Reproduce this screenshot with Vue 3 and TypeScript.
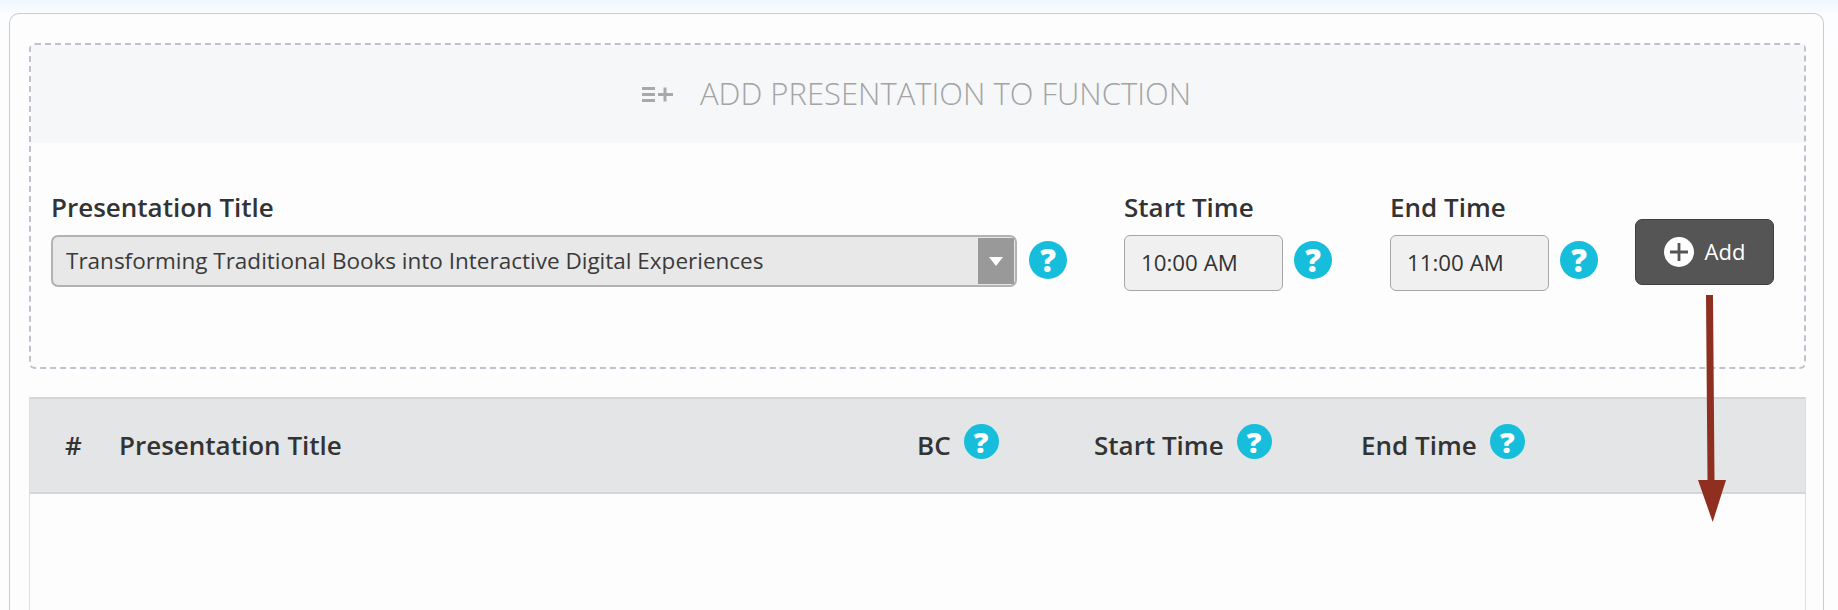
<template>
  <div class="page">
    <div class="card">
      <section class="add-box">
        <header class="add-head">
          <svg class="list-plus" width="31" height="18" viewBox="0 0 31 18" aria-hidden="true">
            <path d="M0 2h13v3H0zM0 8h13v3H0zM0 14h13v3H0zM16 8h5.500V2.500h3V8H31v3h-6.500v5.500h-3V11H16z" />
          </svg>
          <h2>ADD PRESENTATION TO FUNCTION</h2>
        </header>
        <div class="add-form">
          <div class="field">
            <label>Presentation Title</label>
            <div class="control">
              <div class="select">
                <span class="select-text">{{ selected }}</span>
                <span class="select-arrow"><i></i></span>
              </div>
              <span class="help">?</span>
            </div>
          </div>
          <div v-for="t in times" :key="t.label" class="field">
            <label>{{ t.label }}</label>
            <div class="control">
              <div class="time">{{ t.value }}</div>
              <span class="help">?</span>
            </div>
          </div>
          <button class="add-btn" type="button">
            <svg width="30" height="30" viewBox="0 0 30 30" aria-hidden="true">
              <circle cx="15" cy="15" r="15" fill="#fff" />
              <path d="M6 13.600h7.600V6h2.800v7.600H24v2.800h-7.600V24h-2.800v-7.600H6z" fill="#555" />
            </svg>
            <span class="add-label">Add</span>
          </button>
        </div>
      </section>

      <div class="table">
        <div class="thead">
          <div v-for="c in columns" :key="c.label" class="th">
            {{ c.label }}
            <span v-if="c.help" class="help small">?</span>
          </div>
        </div>
        <div class="tbody"></div>
      </div>
    </div>

    <!-- annotation drawn over the screenshot -->
    <svg class="annotation" width="60" height="240" viewBox="0 0 60 240" aria-hidden="true">
      <path d="M26 0h7l1.500 185H46L32.700 227 18 185h9.500z" fill="#8f2f1f" />
    </svg>
  </div>
</template>

<script setup lang="ts">
const selected = 'Transforming Traditional Books into Interactive Digital Experiences'

const times = [
  { label: 'Start Time', value: '10:00 AM' },
  { label: 'End Time', value: '11:00 AM' },
]

const columns = [
  { label: '#', help: false },
  { label: 'Presentation Title', help: false },
  { label: 'BC', help: true },
  { label: 'Start Time', help: true },
  { label: 'End Time', help: true },
]
</script>

<style scoped>
.page {
  position: relative;
  height: 610px;
  box-sizing: border-box;
  overflow: hidden;
  padding: 13px 14px 0 9px;
  background: linear-gradient(180deg, #eff6fe 0, #fbfdff 13px, #fdfdfe 40px);
  font-family: 'Open Sans', 'Noto Sans', sans-serif;
  color: #333;
}

.card {
  height: 597px;
  box-sizing: border-box;
  border: 1px solid #c9ccd2;
  border-bottom: 0;
  border-radius: 10px 10px 0 0;
  background: #fdfdfe;
  padding: 29px 17px 0 19px;
}

.add-box {
  height: 326px;
  box-sizing: border-box;
  border: 2px dashed #bfc2cd;
  border-radius: 6px;
}

.add-head {
  height: 98px;
  box-sizing: border-box;
  background: #f6f7f8;
  display: flex;
  align-items: center;
  justify-content: center;
  gap: 27px;
  padding: 0 2px 2px 0;
}

.list-plus {
  fill: #a9a9a9;
  flex: none;
  margin-top: 2px;
}

.add-head h2 {
  margin: 0;
  font-size: 31px;
  font-weight: 300;
  color: #a4a4a4;
}

.add-form {
  display: flex;
  align-items: flex-start;
  padding: 47px 0 0 20px;
}

.field label {
  display: block;
  height: 45px;
  line-height: 35px;
  font-size: 26px;
  font-weight: 600;
  color: #333;
}

.field + .field {
  margin-left: 57px;
}

.field:nth-child(3) {
  margin-left: 58px;
}

.control {
  display: flex;
  align-items: flex-start;
  gap: 11px;
}

.select {
  width: 966px;
  height: 52px;
  box-sizing: border-box;
  display: flex;
  justify-content: space-between;
  align-items: stretch;
  border: 2px solid #b2b2b2;
  border-radius: 7px;
  background: #e8e8e8;
  padding: 1px;
  margin-right: 1px;
}

.select-text {
  padding-left: 12px;
  line-height: 46px;
  font-size: 22.5px;
  color: #3a3a3a;
}

.select-arrow {
  width: 36px;
  background: #999;
  display: flex;
  align-items: center;
  justify-content: center;
}

.select-arrow i {
  width: 0;
  height: 0;
  border-left: 7px solid transparent;
  border-right: 7px solid transparent;
  border-top: 9px solid #fff;
}

.time {
  width: 159px;
  height: 56px;
  box-sizing: border-box;
  border: 1px solid #a6a6a6;
  border-radius: 6px;
  background: #f0f0f0;
  padding-left: 16px;
  line-height: 54px;
  font-size: 22.3px;
  color: #333;
}

.help {
  flex: none;
  width: 38px;
  height: 38px;
  margin-top: 6px;
  border-radius: 50%;
  background: #17bedb;
  color: #fff;
  font-size: 31px;
  font-weight: 800;
  line-height: 38px;
  text-align: center;
}

.add-btn {
  width: 139px;
  height: 66px;
  margin: 29px 0 0 37px;
  border: 1px solid #3f3f3f;
  border-radius: 7px;
  background: #555;
  color: #fff;
  font-family: inherit;
  font-size: 22px;
  display: flex;
  align-items: center;
  justify-content: center;
  gap: 11px;
}

.add-label {
  margin-top: -2px;
}

.table {
  margin-top: 28px;
  height: 230px;
  border-left: 1px solid #dcdde0;
  border-right: 1px solid #dcdde0;
}

.thead {
  height: 97px;
  box-sizing: border-box;
  border: solid #d5d5d6;
  border-width: 2px 0;
  background: #e4e5e6;
  display: grid;
  grid-template-columns: 54px 798px 177px 267px 1fr;
  align-items: center;
  padding: 0 0 2px 35px;
}

.th {
  display: flex;
  align-items: center;
  gap: 13px;
  font-size: 26px;
  font-weight: 600;
  color: #333;
}

.help.small {
  width: 35px;
  height: 35px;
  margin: -6px 0 0;
  font-size: 29px;
  line-height: 35px;
}

.annotation {
  position: absolute;
  left: 1680px;
  top: 295px;
}
</style>

<style>
body {
  margin: 0;
  background: #fff;
}
</style>
